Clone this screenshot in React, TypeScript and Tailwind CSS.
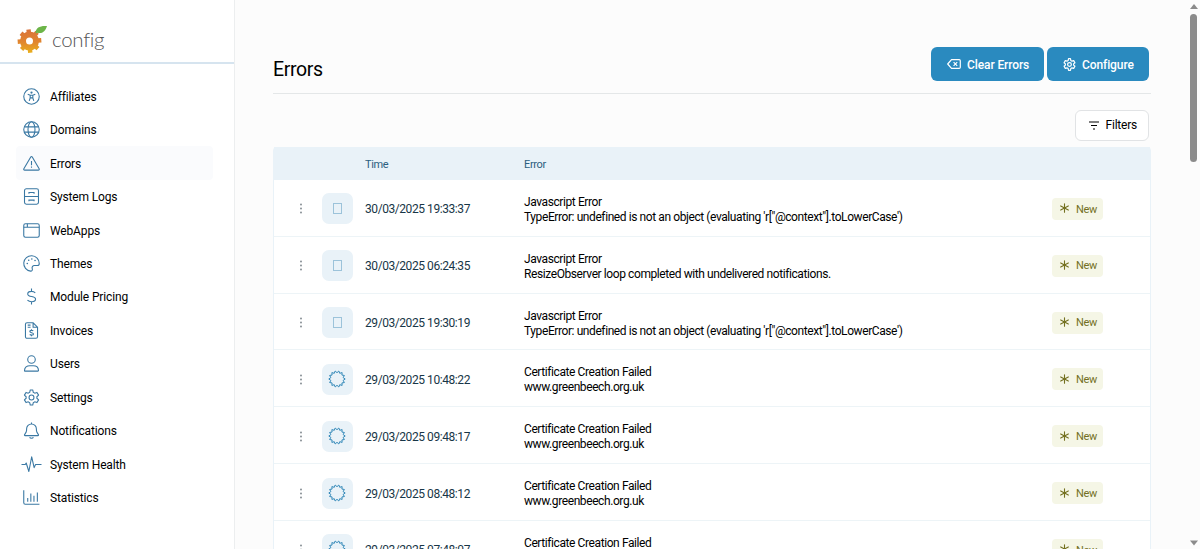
import React from 'react'

const navItems = [
    { label: "Affiliates", icon: "affiliates" },
    { label: "Domains", icon: "domains" },
    { label: "Errors", icon: "errors" },
    { label: "System Logs", icon: "logs" },
    { label: "WebApps", icon: "webapps" },
    { label: "Themes", icon: "themes" },
    { label: "Module Pricing", icon: "pricing" },
    { label: "Invoices", icon: "invoices" },
    { label: "Users", icon: "users" },
    { label: "Settings", icon: "settings" },
    { label: "Notifications", icon: "notifications" },
    { label: "System Health", icon: "health" },
    { label: "Statistics", icon: "statistics" },
]

const jsError = "TypeError: undefined is not an object (evaluating 'r[\"@context\"].toLowerCase')"

const errors = [
    { time: "30/03/2025 19:33:37", type: "Javascript Error", detail: jsError },
    { time: "30/03/2025 06:24:35", type: "Javascript Error", detail: "ResizeObserver loop completed with undelivered notifications." },
    { time: "29/03/2025 19:30:19", type: "Javascript Error", detail: jsError },
    { time: "29/03/2025 10:48:22", type: "Certificate Creation Failed", detail: "www.greenbeech.org.uk" },
    { time: "29/03/2025 09:48:17", type: "Certificate Creation Failed", detail: "www.greenbeech.org.uk" },
    { time: "29/03/2025 08:48:12", type: "Certificate Creation Failed", detail: "www.greenbeech.org.uk" },
    { time: "29/03/2025 07:48:07", type: "Certificate Creation Failed", detail: "www.greenbeech.org.uk" },
]

// Rounded six-tooth cog, shared by the sidebar and the Configure button
const cogPath = "M7.700 1h2.600l.6 2.500 1.500.9 2.400-.8 1.700 2.900-1.800 1.700v1.600l1.800 1.700-1.700 2.900-2.400-.8-1.500.9-.6 2.500H7.700l-.6-2.500-1.500-.9-2.400.8-1.700-2.900 1.800-1.700V8.200L1.500 6.500l1.700-2.900 2.400.8 1.500-.9z"

const icons: Record<string, React.ReactNode> = {
    affiliates: (
        <>
            <circle cx="9" cy="9" r="8.200" />
            <circle cx="9" cy="4.800" r="1.200" fill="currentColor" stroke="none" />
            <path d="M5 6.700l2.600 1h2.800l2.600-1M7.600 7.700v2.700l-1 3.200M10.400 7.700v2.700l1 3.200M7.600 10.500h2.800" />
        </>
    ),
    domains: (
        <>
            <circle cx="9" cy="9" r="8.200" />
            <ellipse cx="9" cy="9" rx="3.700" ry="8.200" />
            <path d="M1.300 6.200h15.400M1.300 11.800h15.400" />
        </>
    ),
    errors: (
        <>
            <path d="M8.200 2.200c.4-.7 1.200-.7 1.600 0l7.300 12.300c.4.700 0 1.500-.9 1.500H1.800c-.9 0-1.300-.8-.9-1.500z" />
            <path d="M9 6.300v4.500M9 12.300v1.300" />
        </>
    ),
    logs: (
        <>
            <rect x="1.600" y=".8" width="14.800" height="16.400" rx="2" />
            <path d="M1.600 9h14.800M6.300 6V4.800h5.400V6M6.300 14v-1.200h5.400V14" />
        </>
    ),
    webapps: (
        <>
            <rect x=".8" y="1.900" width="16.400" height="14.200" rx="1.800" />
            <path d="M.8 5.600h16.400M4.600 1.900v3.700" />
        </>
    ),
    themes: (
        <>
            <path d="M17.200 9A8.200 8.200 0 1 0 8 17.100c1.500.1 2.300-1.300 1.800-2.500-.7-1.700.5-3.400 2.200-3.400h3.100c1.300 0 2.100-.9 2.100-2.200z" />
            <path strokeWidth="1.600" strokeLinecap="round" d="M4.500 8.900h.1M6 5.600h.1M9.300 4.200h.1M12.700 5.900h.1" />
        </>
    ),
    pricing: <path d="M9 .6v2.900M9 14.500v2.900M13 5.100c-1-1-2.400-1.500-4-1.500-2.300 0-4 1-4 2.700 0 4 8.300 1.600 8.300 5.400 0 1.800-1.700 2.800-4.100 2.800-1.900 0-3.400-.6-4.500-1.700" />,
    invoices: (
        <>
            <path d="M4.300.8h6.400L15.400 5.500v10c0 .9-.7 1.700-1.700 1.700H4.300c-1 0-1.700-.8-1.700-1.700v-13C2.600 1.500 3.300.8 4.300.8zM10.700.8v4.700h4.700M5 3.300h3M5 5.500h3" />
            <path d="M10.900 9.300c-1.100-.7-3.700-.7-3.700.8 0 1.700 3.900.7 3.900 2.500 0 1.500-2.800 1.500-4 .6M9 7.800v1.400M9 13.700v1.400" />
        </>
    ),
    users: (
        <>
            <circle cx="9" cy="4.800" r="4" />
            <path d="M1.600 16.500c0-3.300 2.500-5.200 5.600-5.200h3.600c3.100 0 5.600 1.900 5.600 5.200 0 .4-.2.600-.6.600H2.200c-.4 0-.6-.2-.6-.6z" />
        </>
    ),
    settings: (
        <>
            <path strokeLinejoin="round" d={cogPath} />
            <circle cx="9" cy="9" r="2.600" />
        </>
    ),
    notifications: (
        <path d="M9 .5v1.600M9 2.100a5.200 5.200 0 0 0-5.200 5.200v1.500c0 2-1.300 3.400-2.100 4.500-.4.600-.1 1.100.5 1.100h13.600c.6 0 .9-.5.500-1.100-.8-1.100-2.100-2.500-2.100-4.500V7.300A5.200 5.200 0 0 0 9 2.100zM7 16.100c.6 1.500 3.400 1.500 4 0" />
    ),
    health: <path strokeLinejoin="round" d="M-1.600 9h4l1-1.600 2.800 9L9.200.8l2.600 11.500L13.300 9h6.300" />,
    statistics: <path d="M.8 1.200v13.400c0 1 .6 1.600 1.600 1.600h15M5 9.500v3.900M8.300 4.700v8.700M11.600 7.200v6.200M15.200 3.800v9.600" />,
}

const NavIcon = ({ name }: { name: string }) => (
    <svg className="h-[17px] w-[17px] shrink-0 overflow-visible text-[#3a78a3]" viewBox="0 0 18 18" fill="none" stroke="currentColor" strokeWidth="1.15">
        {icons[name]}
    </svg>
)

// 14-point seal outline for certificate errors
const sealPoints = Array.from({ length: 28 }, (_, i) => {
    const r = i % 2 === 0 ? 8.2 : 6.3
    const a = ((i + 1) * Math.PI) / 14
    return `${(9 + r * Math.sin(a)).toFixed(2)},${(9 - r * Math.cos(a)).toFixed(2)}`
}).join(" ")

const Logo = () => (
    <div className="flex h-[62px] items-start pl-[17px] pt-6">
        <svg className="h-[31px] w-[31px] shrink-0" viewBox="0 0 31 31" fill="none">
            <defs>
                <linearGradient id="cog" gradientUnits="userSpaceOnUse" x1="12" y1="5" x2="12" y2="29">
                    <stop offset="0" stopColor="#d9713a" />
                    <stop offset=".55" stopColor="#e1862e" />
                    <stop offset="1" stopColor="#e9b01c" />
                </linearGradient>
            </defs>
            <circle cx="12.500" cy="17" r="6.500" stroke="url(#cog)" strokeWidth="6" />
            <g stroke="url(#cog)" strokeWidth="4.400">
                <path d="M12.900 25l.4 3.800M18.400 22.400l2.600 2.300M20.500 16.500l3.800-.3M17.800 11l2.300-2.700M11.900 9l-.4-3.500M6.700 11.500L4 9.300M4.500 17.400l-3.800.3M7 22.800l-2.400 2.600" />
            </g>
            <path d="M18.500 8.500C19 3.500 23 1.500 30 2c-1.500 5.500-5 8-9.500 6.800l-1.500.8z" fill="#6cb548" />
        </svg>
        <span className="ml-[4px] font-[Lato] text-[20.500px] font-light leading-[30px] tracking-[-0.300px] text-[#555]">config</span>
    </div>
)

const Sidebar = () => (
    <aside className="h-full w-[235px] shrink-0 border-r border-[#eceeef] bg-white">
        <div className="border-b-2 border-[#d6e4ef]">
            <Logo />
        </div>
        <nav className="pl-4 pr-[21px] pt-[15.500px]">
            {navItems.map((item) => (
                <a
                    key={item.label}
                    className={`flex h-[33.460px] items-center gap-[10.500px] rounded pl-[6.500px] text-[12px] tracking-[-0.150px] text-black ${item.label === "Errors" ? "bg-[#fafbfd]" : ""}`}
                >
                    <NavIcon name={item.icon} />
                    <span className="pt-px">{item.label}</span>
                </a>
            ))}
        </nav>
    </aside>
)

const ErrorRow = ({ item }: { item: (typeof errors)[number] }) => (
    <div className="flex h-[56.830px] items-center border-b border-[#edf4f7] pt-[2px]">
        <div className="flex w-[48px] justify-center pl-[6px]">
            <svg width="4" height="11" viewBox="0 0 4 11" fill="#7c858b">
                <circle cx="2" cy="1.500" r=".9" />
                <circle cx="2" cy="5.500" r=".9" />
                <circle cx="2" cy="9.500" r=".9" />
            </svg>
        </div>
        <div className="flex h-[31px] w-[31px] items-center justify-center rounded-[7px] bg-[#e9f2f8]">
            {item.type === "Javascript Error" ? (
                <span className="h-[11px] w-[9px] border border-[#9cc3da]"></span>
            ) : (
                <svg className="-ml-px -mt-px" width="18" height="18" viewBox="0 0 18 18" fill="none" stroke="#3389b9" strokeWidth="1">
                    <polygon points={sealPoints} strokeLinejoin="round" />
                </svg>
            )}
        </div>
        <div className="ml-3 w-[159px] pt-px text-[12px] tracking-[-0.430px] text-[#173647]">{item.time}</div>
        <div className="flex-1 pt-[2px] text-[12px] leading-[15px] tracking-[-0.410px] text-black">
            <p>{item.type}</p>
            <p>{item.detail}</p>
        </div>
        <div className="mr-[47px] flex h-[22px] w-[51px] items-center rounded bg-[#f5f6e6] pl-[8px] text-[11px] tracking-[-0.350px] text-[#73701f]">
            <svg className="-mt-px mr-[7px]" width="9" height="10" viewBox="0 0 9 10" stroke="currentColor" strokeWidth="1.100" strokeLinecap="round">
                <path d="M4.500.7v8.600M.7 2.900l7.600 4.200M.7 7.100l7.600-4.200" />
            </svg>
            <span className="pt-[2px]">New</span>
        </div>
    </div>
)

const App = () => {
    return (
        <div className="flex h-[549px] w-full overflow-hidden bg-[#fcfcfc] font-[Roboto,sans-serif]">
            <Sidebar />

            <main className="min-w-0 flex-1 pl-[38px] pr-[36px]">
                <header className="flex h-[94px] items-start justify-between border-b border-[#e4e7e8] pt-[47px]">
                    <h1 className="mt-[8px] text-[19.500px] leading-[30px] tracking-[-0.350px] text-black">Errors</h1>
                    <div className="mr-[2px] flex gap-[3px] text-[12px] font-medium tracking-[-0.100px] text-white">
                        <button className="flex h-[34px] w-[113px] items-center rounded-md bg-[#2a8abf] pl-4">
                            <svg className="mr-[6px]" width="14" height="10" viewBox="0 0 14 10" fill="none" stroke="currentColor" strokeWidth="1.200" strokeLinejoin="round">
                                <path d="M4.500.7h7.700c.6 0 1.100.5 1.100 1.100v6.400c0 .6-.5 1.100-1.100 1.100H4.500L.7 5z" />
                                <path d="M6.600 3.200l3.600 3.600M10.200 3.200L6.600 6.800" />
                            </svg>
                            <span className="pt-[2px]">Clear Errors</span>
                        </button>
                        <button className="flex h-[34px] w-[102px] items-center rounded-md bg-[#2a8abf] pl-4">
                            <svg className="mr-[6px]" width="13" height="13" viewBox="0 0 18 18" fill="none" stroke="currentColor" strokeWidth="1.700" strokeLinejoin="round">
                                <path d={cogPath} />
                                <circle cx="9" cy="9" r="2.600" />
                            </svg>
                            <span className="pt-[2px]">Configure</span>
                        </button>
                    </div>
                </header>

                <div className="flex h-[53px] items-center justify-end pr-[2px] pt-[9px]">
                    <button className="flex h-[31px] w-[74px] items-center rounded-md border border-[#e1e3e5] bg-white pl-[12.500px] text-[12px] tracking-[-0.200px] text-black">
                        <svg className="mr-[7px]" width="10" height="9" viewBox="0 0 10 9" stroke="currentColor" strokeWidth="1.200">
                            <path d="M0 1h10M2 4.500h6M4 8h2" />
                        </svg>
                        Filters
                    </button>
                </div>

                {/* Errors table */}
                <div className="rounded-t border-x border-[#e9f2f8] bg-white">
                    <div className="flex h-[33px] items-center bg-[#e9f2f8] pt-[3px] text-[11px] tracking-[-0.350px] text-[#2c5f7f]">
                        <div className="w-[250px] pl-[91px]">Time</div>
                        <div>Error</div>
                    </div>
                    {errors.map((item) => (
                        <ErrorRow key={item.time} item={item} />
                    ))}
                </div>
            </main>

            {/* Scrollbar */}
            <div className="flex w-[13px] shrink-0 flex-col items-center justify-between bg-[#fcfcfc] pb-[3px] pt-[4px]">
                <div className="flex flex-col items-center gap-[5px]">
                    <svg width="8" height="5" viewBox="0 0 8 5" fill="#8b8b8b"><path d="M0 5L4 0l4 5z" /></svg>
                    <div className="h-[148px] w-[7px] rounded-full bg-[#8b8b8b]"></div>
                </div>
                <svg width="8" height="6" viewBox="0 0 8 6" fill="#8b8b8b"><path d="M0 .5h8l-4 5z" /></svg>
            </div>
        </div>
    )
}

export default App
